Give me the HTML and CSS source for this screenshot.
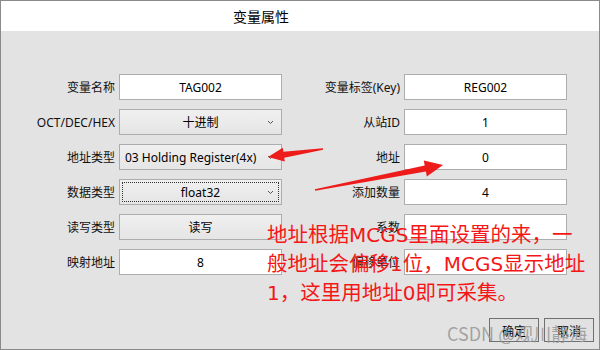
FILE: index.html
```html
<!DOCTYPE html>
<html lang="zh-CN">
<head>
    <meta charset="UTF-8">
    <title>变量属性</title>
    <link rel="stylesheet" href="styles.css">
</head>
<body>
    <div class="dialog">
        <div class="title">变量属性</div>

        <div class="form">
            <label>变量名称</label>
            <div class="field input">TAG002</div>
            <label>变量标签(Key)</label>
            <div class="field input">REG002</div>

            <label>OCT/DEC/HEX</label>
            <div class="field select">十进制<svg class="chev" viewBox="0 0 7 5"><path d="M1 1 L3.5 3.5 L6 1"/></svg></div>
            <label>从站ID</label>
            <div class="field input">1</div>

            <label>地址类型</label>
            <div class="field select left">03 Holding Register(4x)<svg class="chev" viewBox="0 0 7 5"><path d="M1 1 L3.5 3.5 L6 1"/></svg></div>
            <label>地址</label>
            <div class="field input">0</div>

            <label>数据类型</label>
            <div class="field select focus">float32<svg class="chev" viewBox="0 0 7 5"><path d="M1 1 L3.5 3.5 L6 1"/></svg></div>
            <label>添加数量</label>
            <div class="field input">4</div>

            <label>读写类型</label>
            <div class="field select">读写</div>
            <label>系数</label>
            <div class="field input"></div>

            <label>映射地址</label>
            <div class="field input">8</div>
            <label>偏移单位</label>
            <div class="field input"></div>
        </div>

        <div class="footer">
            <button class="btn">确定</button>
            <button class="btn">取消</button>
        </div>

        <!-- annotation overlay -->
        <svg class="marks" viewBox="0 0 600 350">
            <polygon points="268,157 284.8,161.6 284.2,157.7 323.1,149.7 322.9,148.3 283.4,151.7 282.8,147.8"/>
            <polygon points="443,165 426.8,176.4 425.9,171.4 315.15,190.8 314.85,189.2 424.7,165.5 423.8,160.6"/>
        </svg>
        <div class="note">地址根据<span class="lat">MCGS</span>里面设置的来，一<br>般地址会偏移<span class="lat">1</span>位，<span class="lat">MCGS</span>显示地址<br><span class="lat">1</span>，这里用地址<span class="lat">0</span>即可采集。</div>
        <div class="watermark">CSDN @观川静海</div>
    </div>
</body>
</html>
```

FILE: styles.css
```css
body {
    margin: 0;
    font-family: "Noto Sans", "Noto Sans CJK SC", sans-serif;
}

.dialog {
    width: 600px;
    height: 350px;
    box-sizing: border-box;
    border: 1px solid #8a8a8a;
    background: #e3e3e3;
    position: relative;
    overflow: hidden;
}

.title {
    height: 30px;
    background: #fff;
    font-size: 14px;
    color: #000;
    display: flex;
    align-items: center;
    justify-content: center;
    padding-right: 78px;
}

.form {
    display: grid;
    grid-template-columns: 110px 163px 114px 163px;
    grid-auto-rows: 26px;
    column-gap: 4px;
    row-gap: 9px;
    padding: 43px 0 0 4px;
    font-size: 12px;
    color: #000;
}

.form label {
    display: flex;
    align-items: center;
    justify-content: flex-end;
    color: #111;
}

.field {
    box-sizing: border-box;
    display: flex;
    align-items: center;
    justify-content: center;
    position: relative;
    border: 1px solid #adadad;
}

.input {
    background: #fff;
}

.select {
    background: linear-gradient(#f0f0f0, #e5e5e5);
}

.select.left {
    justify-content: flex-start;
    padding-left: 5px;
}

.select.focus::after {
    content: "";
    position: absolute;
    inset: 2px;
    border: 1px dotted #333;
}

.chev {
    position: absolute;
    right: 7px;
    top: 10px;
    width: 7px;
    height: 5px;
    fill: none;
    stroke: #555;
    stroke-width: 1;
}

.footer {
    display: flex;
    justify-content: flex-end;
    gap: 5px;
    padding-right: 5px;
    margin-top: 43px;
}

.btn {
    width: 50px;
    height: 24px;
    border: 1px solid #707070;
    background: #e1e1e1;
    font-family: "Noto Sans CJK SC", sans-serif;
    font-size: 12px;
    color: #000;
    padding: 0;
}

.marks {
    position: absolute;
    left: -1px;
    top: -1px;
    width: 600px;
    height: 350px;
    fill: #ee1b1b;
    pointer-events: none;
}

.note {
    position: absolute;
    left: 266px;
    top: 219px;
    font-family: "Noto Sans CJK SC", sans-serif;
    font-size: 20.5px;
    line-height: 27px;
    color: #f51717;
    white-space: nowrap;
}

.note .lat {
    font-family: "DejaVu Sans", sans-serif;
    font-size: 20px;
}

.watermark {
    position: absolute;
    left: 446px;
    top: 319px;
    font-family: "Noto Sans CJK SC", sans-serif;
    font-size: 18px;
    color: rgba(150, 150, 150, 0.85);
    white-space: nowrap;
}
```
